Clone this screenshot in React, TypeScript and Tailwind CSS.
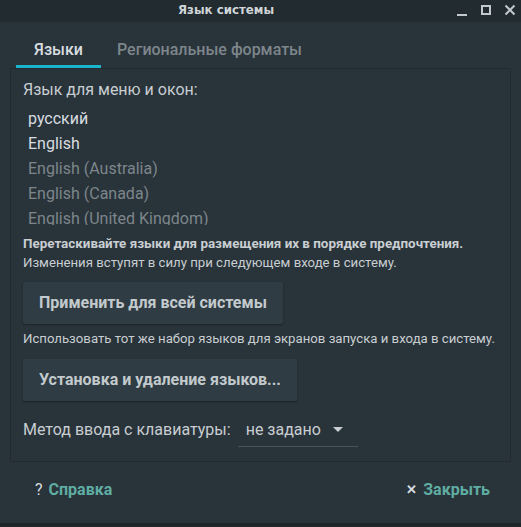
import React from 'react';

const languages = [
  { name: 'русский', active: true },
  { name: 'English', active: true },
  { name: 'English (Australia)', active: false },
  { name: 'English (Canada)', active: false },
  { name: 'English (United Kingdom)', active: false },
];

const App: React.FC = () => {
  return (
    <div className="w-[521px] h-[527px] bg-[#29333a] flex flex-col overflow-hidden" style={{ fontFamily: 'Roboto, "Noto Sans", sans-serif' }}>
      {/* title bar */}
      <div className="h-[22px] bg-[#222b30] relative flex items-center shrink-0">
        <span className="ml-[178px] text-[11.8px] font-bold text-[#d0d5d8]" style={{ fontFamily: '"DejaVu Sans", sans-serif' }}>Язык системы</span>
        <div className="absolute right-[4px] top-0 h-full flex items-center gap-[10px]">
          <svg width="14" height="14" viewBox="0 0 14 14"><rect x="2" y="10" width="10" height="2" fill="#c2c9cd" /></svg>
          <svg width="14" height="14" viewBox="0 0 14 14"><rect x="3" y="2" width="8" height="8" fill="none" stroke="#c2c9cd" strokeWidth="2" /></svg>
          <svg width="14" height="14" viewBox="0 0 14 14"><path d="M2.5 1.5 L11.5 10.5 M11.5 1.5 L2.5 10.5" stroke="#c2c9cd" strokeWidth="2" /></svg>
        </div>
      </div>

      {/* tabs */}
      <div className="flex px-[16px] mt-[14px] h-[32px] shrink-0">
        <div className="w-[85px] pt-[2px] flex items-start justify-center border-b-[3px] border-[#1ab4cc] text-[16px] font-medium text-[#d8dde0]">Языки</div>
        <div className="px-[16px] pt-[2px] text-[16px] font-medium text-[#7d868b]">Региональные форматы</div>
      </div>

      {/* panel */}
      <div className="mx-[10px] h-[394px] border border-[#222a2f] bg-[#29333a] px-[12px] pt-[11px] flex flex-col">
        <div className="text-[16px] text-[#c8ced1] leading-[19px]">Язык для меню и окон:</div>
        <div className="h-[119px] overflow-hidden mt-[7px] pl-[5px]">
          {languages.map((l) => (
            <div key={l.name} className={`h-[25px] leading-[25px] text-[16px] ${l.active ? 'text-[#d8dde0]' : 'text-[#7d868b]'}`}>{l.name}</div>
          ))}
        </div>
        <div className="mt-[10px] whitespace-nowrap text-[13.4px] font-bold text-[#c8ced1] leading-[18px]">Перетаскивайте языки для размещения их в порядке предпочтения.</div>
        <div className="whitespace-nowrap text-[13.2px] text-[#c8ced1] leading-[19px]">Изменения вступят в силу при следующем входе в систему.</div>
        <button className="mt-[10px] self-start px-[16px] h-[42px] bg-[#2f3c43] rounded-[2px] shadow-[0_1px_2px_rgba(0,0,0,0.35)] text-[16px] font-bold text-[#c3cacd] text-left">Применить для всей системы</button>
        <div className="mt-[6px] whitespace-nowrap text-[13.2px] text-[#c8ced1] leading-[18px]">Использовать тот же набор языков для экранов запуска и входа в систему.</div>
        <button className="mt-[11px] self-start px-[16px] h-[42px] bg-[#2f3c43] rounded-[2px] shadow-[0_1px_2px_rgba(0,0,0,0.35)] text-[16px] font-bold text-[#c3cacd] text-left">Установка и удаление языков...</button>
        <div className="mt-[12px] flex items-center">
          <span className="text-[16px] text-[#c8ced1]">Метод ввода с клавиатуры:</span>
          <div className="ml-[7px] w-[120px] h-[34px] border-b border-[#4a555b] flex items-center pl-[8px] gap-[11px]">
            <span className="text-[16px] text-[#c8ced1]">не задано</span>
            <svg width="12" height="8" viewBox="0 0 12 8"><path d="M1 1 L11 1 L6 6 Z" fill="#c8ced1" /></svg>
          </div>
        </div>
      </div>

      {/* footer */}
      <div className="flex items-center justify-between pl-[35px] pr-[31px] pb-[6px] h-[61px] shrink-0">
        <div className="flex items-center gap-[6px] text-[16px] font-bold">
          <span className="text-[#d8dde0] font-normal">?</span>
          <span className="text-[#5fada3]">Справка</span>
        </div>
        <div className="flex items-center gap-[6px] text-[16px] font-bold">
          <span className="text-[#d8dde0] text-[13px]">✕</span>
          <span className="text-[#5fada3]">Закрыть</span>
        </div>
      </div>
      <div className="flex-1 bg-[#1f272b]" />
    </div>
  );
};

export default App;
